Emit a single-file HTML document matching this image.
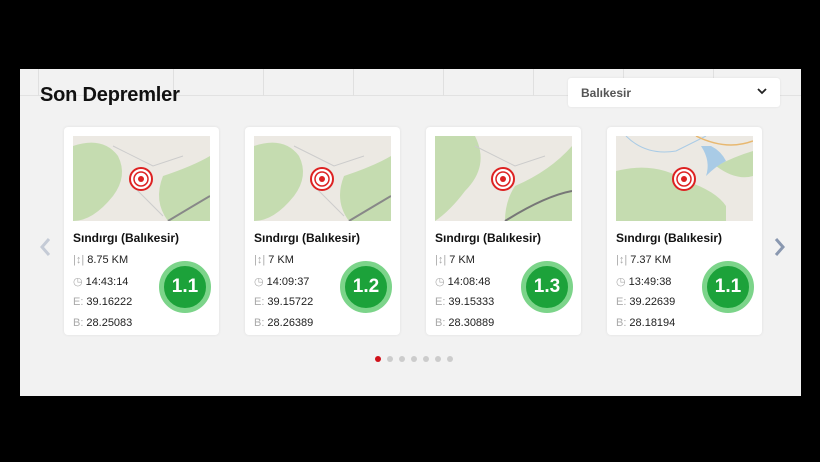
<!DOCTYPE html>
<html><head><meta charset="utf-8"><style>
*{margin:0;padding:0;box-sizing:border-box}
body{width:820px;height:462px;background:#000;position:relative;overflow:hidden;font-family:"Liberation Sans",sans-serif}
.panel{position:absolute;left:20px;top:69px;width:781px;height:327px;background:#f2f2f2;overflow:hidden}
.grid{position:absolute;left:0;top:0;width:781px;height:27px;border-bottom:1px solid #e2e2e2}
.grid i{position:absolute;top:0;width:1px;height:27px;background:#e0e0e0}
h1{position:absolute;left:20px;top:15px;font-size:20px;font-weight:bold;color:#111;letter-spacing:-0.2px}
.sel{position:absolute;left:548px;top:9px;width:212px;height:29px;background:#fff;border-radius:3px;box-shadow:0 0 2px rgba(0,0,0,.08)}
.sel span{position:absolute;left:13px;top:8px;font-size:12px;color:#555;font-weight:bold}
.sel svg{position:absolute;right:13px;top:10px}
.card{position:absolute;top:58px;width:155px;height:208px;background:#fff;border-radius:4px;box-shadow:0 0 3px rgba(0,0,0,.08)}
.map{position:absolute;left:9px;top:9px;width:137px;height:85px;background:#ece9e3;overflow:hidden}
.t{position:absolute;left:9px;top:104px;font-size:12px;font-weight:bold;color:#111}
.r{position:absolute;left:9px;font-size:11px;color:#222}
.r b{font-weight:normal;color:#aaa;margin-right:3px}
.mag{position:absolute;left:95px;top:134px;width:52px;height:52px;border-radius:50%;background:#1ca23a;border:5px solid #7cd48a;color:#fff;font-weight:bold;font-size:19px;text-align:center;line-height:42px}
.arr{position:absolute;top:168px}
.dots{position:absolute;top:287px;left:355px}
.dots i{position:absolute;width:6px;height:6px;border-radius:50%;background:#ccc;top:0}
</style></head><body>
<div class="panel">
<div class="grid"><i style="left:18px"></i><i style="left:153px"></i><i style="left:243px"></i><i style="left:333px"></i><i style="left:423px"></i><i style="left:513px"></i><i style="left:603px"></i><i style="left:693px"></i></div>
<h1>Son Depremler</h1>
<div class="sel"><span>Balıkesir</span><svg width="10" height="7" viewBox="0 0 10 7"><path d="M1 1l4 4 4-4" stroke="#222" stroke-width="1.8" fill="none"/></svg></div>
<svg class="arr" style="left:19px" width="12" height="20" viewBox="0 0 12 20"><path d="M10 2L3 10l7 8" stroke="#c5cbd6" stroke-width="3" fill="none"/></svg>
<svg class="arr" style="left:754px" width="12" height="20" viewBox="0 0 12 20"><path d="M2 2l7 8-7 8" stroke="#8a98b0" stroke-width="3" fill="none"/></svg>

<div class="card" style="left:44px">
<div class="map"><svg width="137" height="85"><path d="M0 10 Q30 0 45 20 Q55 40 40 60 Q20 85 0 85Z" fill="#c5dcb0"/><path d="M90 40 Q120 30 137 20 L137 85 L95 85 Q80 65 90 40Z" fill="#c5dcb0"/><path d="M40 10 L80 30 L110 20 M60 50 L90 80" stroke="#ccc" fill="none"/><path d="M95 85 Q120 70 137 60" stroke="#888" stroke-width="2" fill="none"/><circle cx="68" cy="43" r="11" fill="#fff" stroke="#d22" stroke-width="2"/><circle cx="68" cy="43" r="7" fill="none" stroke="#d22" stroke-width="1.5"/><circle cx="68" cy="43" r="3" fill="#d22"/></svg></div>
<div class="t">Sındırgı (Balıkesir)</div>
<div class="r" style="top:127px"><b>|↕|</b>8.75 KM</div>
<div class="r" style="top:148px"><b>◷</b>14:43:14</div>
<div class="r" style="top:169px"><b>E:</b>39.16222</div>
<div class="r" style="top:190px"><b>B:</b>28.25083</div>
<div class="mag">1.1</div></div>

<div class="card" style="left:225px">
<div class="map"><svg width="137" height="85"><path d="M0 10 Q30 0 45 20 Q55 40 40 60 Q20 85 0 85Z" fill="#c5dcb0"/><path d="M90 40 Q120 30 137 20 L137 85 L95 85 Q80 65 90 40Z" fill="#c5dcb0"/><path d="M40 10 L80 30 L110 20 M60 50 L90 80" stroke="#ccc" fill="none"/><path d="M95 85 Q120 70 137 60" stroke="#888" stroke-width="2" fill="none"/><circle cx="68" cy="43" r="11" fill="#fff" stroke="#d22" stroke-width="2"/><circle cx="68" cy="43" r="7" fill="none" stroke="#d22" stroke-width="1.5"/><circle cx="68" cy="43" r="3" fill="#d22"/></svg></div>
<div class="t">Sındırgı (Balıkesir)</div>
<div class="r" style="top:127px"><b>|↕|</b>7 KM</div>
<div class="r" style="top:148px"><b>◷</b>14:09:37</div>
<div class="r" style="top:169px"><b>E:</b>39.15722</div>
<div class="r" style="top:190px"><b>B:</b>28.26389</div>
<div class="mag">1.2</div></div>

<div class="card" style="left:406px">
<div class="map"><svg width="137" height="85"><path d="M0 0 L40 0 Q55 30 30 55 Q15 75 0 85Z" fill="#c5dcb0"/><path d="M80 50 Q115 35 137 10 L137 85 L70 85 Q70 65 80 50Z" fill="#c5dcb0"/><path d="M40 10 L80 30 L110 20" stroke="#ccc" fill="none"/><path d="M70 85 Q110 60 137 55" stroke="#777" stroke-width="2" fill="none"/><circle cx="68" cy="43" r="11" fill="#fff" stroke="#d22" stroke-width="2"/><circle cx="68" cy="43" r="7" fill="none" stroke="#d22" stroke-width="1.5"/><circle cx="68" cy="43" r="3" fill="#d22"/></svg></div>
<div class="t">Sındırgı (Balıkesir)</div>
<div class="r" style="top:127px"><b>|↕|</b>7 KM</div>
<div class="r" style="top:148px"><b>◷</b>14:08:48</div>
<div class="r" style="top:169px"><b>E:</b>39.15333</div>
<div class="r" style="top:190px"><b>B:</b>28.30889</div>
<div class="mag">1.3</div></div>

<div class="card" style="left:587px">
<div class="map"><svg width="137" height="85"><path d="M0 35 Q40 25 70 45 Q100 55 110 70 L110 85 L0 85Z" fill="#c5dcb0"/><path d="M100 30 Q120 20 137 15 L137 40 Q120 45 100 30Z" fill="#c5dcb0"/><path d="M85 10 Q95 25 90 40 Q100 30 110 25 Q105 15 95 10Z" fill="#a9cbe6"/><path d="M10 0 Q30 20 60 15 L90 0" stroke="#a9cbe6" fill="none"/><path d="M80 0 Q110 15 137 5" stroke="#e8b870" stroke-width="1.5" fill="none"/><circle cx="68" cy="43" r="11" fill="#fff" stroke="#d22" stroke-width="2"/><circle cx="68" cy="43" r="7" fill="none" stroke="#d22" stroke-width="1.5"/><circle cx="68" cy="43" r="3" fill="#d22"/></svg></div>
<div class="t">Sındırgı (Balıkesir)</div>
<div class="r" style="top:127px"><b>|↕|</b>7.37 KM</div>
<div class="r" style="top:148px"><b>◷</b>13:49:38</div>
<div class="r" style="top:169px"><b>E:</b>39.22639</div>
<div class="r" style="top:190px"><b>B:</b>28.18194</div>
<div class="mag">1.1</div></div>

<div class="dots"><i style="left:0;background:#d0111a"></i><i style="left:12px"></i><i style="left:24px"></i><i style="left:36px"></i><i style="left:48px"></i><i style="left:60px"></i><i style="left:72px"></i></div>
</div>
</body></html>
